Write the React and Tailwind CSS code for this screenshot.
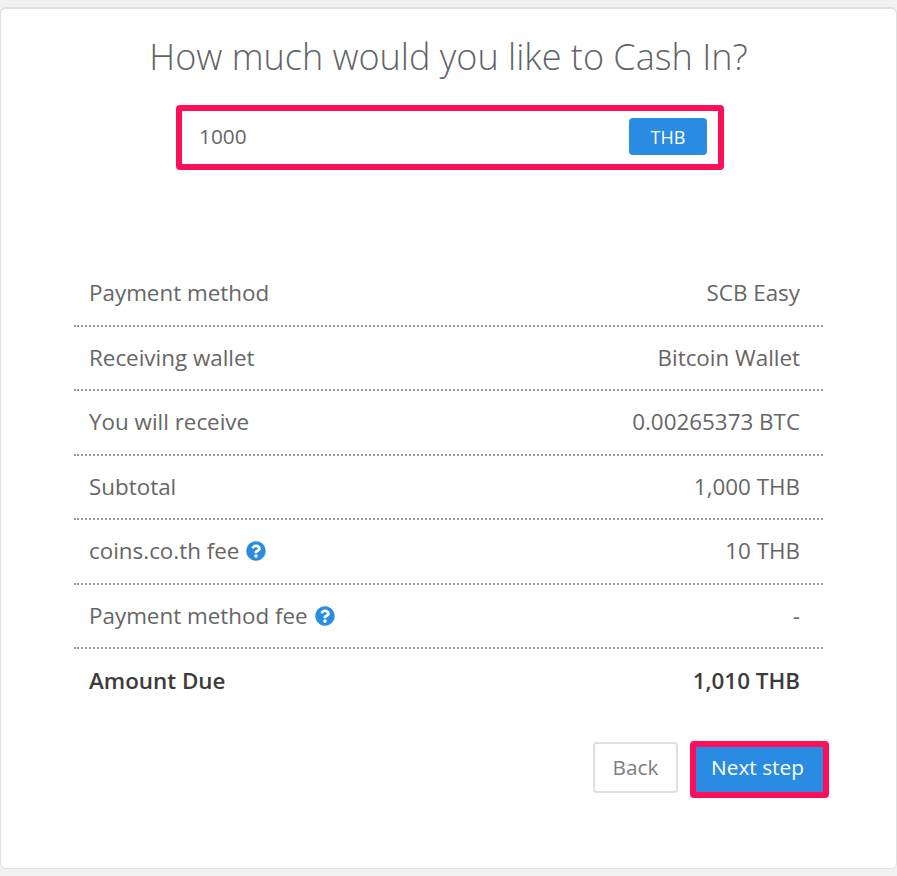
import { FaQuestionCircle } from 'react-icons/fa';

const rows = [
    { label: 'Payment method', value: 'SCB Easy' },
    { label: 'Receiving wallet', value: 'Bitcoin Wallet' },
    { label: 'You will receive', value: '0.00265373 BTC' },
    { label: 'Subtotal', value: '1,000 THB' },
    { label: 'coins.co.th fee', value: '10 THB', help: true },
    { label: 'Payment method fee', value: '-', help: true },
];

const rowClass = 'flex items-center justify-between h-[64.5px] pl-[15px] pr-[23px] border-b-2 border-dotted border-[#999]';

const App = () => {
    return (
        <div className="min-h-[876px] bg-[#f2f2f2] pt-[7px] font-['Open_Sans',sans-serif] text-[#666]">
            <div className="h-[862px] bg-white rounded-md border border-[#e0e0e0] border-t-2 pt-[23px]">
                <h1 className="text-center text-[36px] leading-[50px] font-light text-[#5f6468]">
                    How much would you like to Cash In?
                </h1>

                <div className="mt-[23px] ml-[175px] w-[548px] h-[65px] border-[6px] border-[#ff0f5a] rounded flex items-center justify-between pl-[17px] pr-[11px]">
                    <span className="text-[20.8px] mb-[2px] text-[#666]">1000</span>
                    <button className="w-[78px] h-[37px] mb-[2px] rounded bg-[#2a8be2] text-white text-lg">THB</button>
                </div>

                <div className="mt-[92px] mx-[73px]">
                    {rows.map((row) => (
                        <div key={row.label} className={rowClass}>
                            <span className="flex items-center gap-[7px] text-[22.4px]">
                                {row.label}
                                {row.help && <FaQuestionCircle className="w-5 h-5 text-[#2a8be2]" />}
                            </span>
                            <span className="text-[22.4px]">{row.value}</span>
                        </div>
                    ))}
                    <div className="flex items-center justify-between h-[64.5px] pl-[15px] pr-[23px] text-[22.4px] font-semibold text-[#3b3b3b]">
                        <span>Amount Due</span>
                        <span>1,010 THB</span>
                    </div>
                </div>

                <div className="mt-[27px] mr-[67px] flex items-start justify-end gap-3">
                    <button className="w-[85px] h-[51px] mt-px pt-[2px] rounded border-2 border-[#e0e0e0] bg-white text-[#808080] text-[20.8px]">Back</button>
                    <button className="w-[139px] h-[57px] pb-[2px] pr-[4px] rounded border-[6px] border-[#ff0f5a] bg-[#2a8be2] text-white text-[20.8px]">Next step</button>
                </div>
            </div>
        </div>
    );
};

export default App;
